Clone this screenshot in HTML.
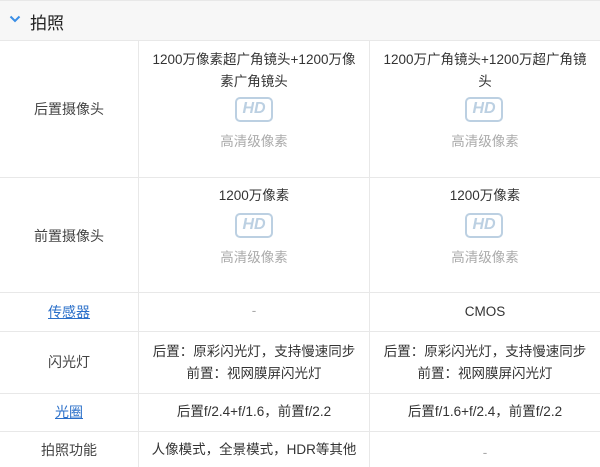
<!DOCTYPE html>
<html><head><meta charset="utf-8"><style>
*{margin:0;padding:0;box-sizing:border-box}
body{width:600px;height:467px;overflow:hidden;background:#fff;font-family:"Liberation Sans","Noto Sans CJK SC",sans-serif;color:#333;position:relative}
.hd{position:absolute;left:0;top:0;width:600px;height:41px;background:#f7f7f7;border-bottom:1px solid #e8e8e8;border-top:1px solid #e8e8e8}
.hd span{position:absolute;left:30px;top:8px;font-size:17px;color:#222}
.hl{position:absolute;left:0;width:600px;height:1px;background:#e8e8e8}
.vl{position:absolute;top:41px;width:1px;height:426px;background:#e8e8e8}
.c{position:absolute;text-align:center;font-size:13.5px;line-height:22px}
.lab{position:absolute;left:0;width:138px;text-align:center;font-size:14px;color:#444}
a{color:#2a6fc9;text-decoration:underline}
.hdi{position:absolute;width:38px;height:25px;border:2.5px solid #bcd0e2;border-radius:5px;color:#bcd0e2;font-style:italic;font-weight:bold;font-size:16px;line-height:20px;text-align:center}
.g{color:#aaa}
</style></head><body>
<div class="hd"><svg style="position:absolute;left:9px;top:14px" width="12" height="8"><path d="M1.5 1.5 L6 6 L10.5 1.5" stroke="#3a8ee6" stroke-width="2" fill="none"/></svg><span>拍照</span></div>
<div class="vl" style="left:138px"></div><div class="vl" style="left:369px"></div>
<div class="hl" style="top:177px"></div><div class="hl" style="top:292px"></div><div class="hl" style="top:331px"></div><div class="hl" style="top:393px"></div><div class="hl" style="top:431px"></div>

<div class="lab" style="top:99px">后置摄像头</div>
<div class="c" style="left:139px;width:230px;top:49px">1200万像素超广角镜头+1200万像<br>素广角镜头</div>
<div class="hdi" style="left:235px;top:97px">HD</div>
<div class="c g" style="left:139px;width:230px;top:131px">高清级像素</div>
<div class="c" style="left:370px;width:230px;top:49px">1200万广角镜头+1200万超广角镜<br>头</div>
<div class="hdi" style="left:465px;top:97px">HD</div>
<div class="c g" style="left:370px;width:230px;top:131px">高清级像素</div>

<div class="lab" style="top:226px">前置摄像头</div>
<div class="c" style="left:139px;width:230px;top:185px">1200万像素</div>
<div class="hdi" style="left:235px;top:213px">HD</div>
<div class="c g" style="left:139px;width:230px;top:247px">高清级像素</div>
<div class="c" style="left:370px;width:230px;top:185px">1200万像素</div>
<div class="hdi" style="left:465px;top:213px">HD</div>
<div class="c g" style="left:370px;width:230px;top:247px">高清级像素</div>

<div class="lab" style="top:302px"><a>传感器</a></div>
<div class="c g" style="left:139px;width:230px;top:300px">-</div>
<div class="c" style="left:370px;width:230px;top:301px">CMOS</div>

<div class="lab" style="top:352px">闪光灯</div>
<div class="c" style="left:139px;width:230px;top:341px">后置：原彩闪光灯，支持慢速同步<br>前置：视网膜屏闪光灯</div>
<div class="c" style="left:370px;width:230px;top:341px">后置：原彩闪光灯，支持慢速同步<br>前置：视网膜屏闪光灯</div>

<div class="lab" style="top:402px"><a>光圈</a></div>
<div class="c" style="left:139px;width:230px;top:401px">后置f/2.4+f/1.6，前置f/2.2</div>
<div class="c" style="left:370px;width:230px;top:401px">后置f/1.6+f/2.4，前置f/2.2</div>

<div class="lab" style="top:440px">拍照功能</div>
<div class="c" style="left:139px;width:230px;top:439px">人像模式，全景模式，HDR等其他</div>
<div class="c g" style="left:370px;width:230px;top:442px">-</div>
</body></html>
